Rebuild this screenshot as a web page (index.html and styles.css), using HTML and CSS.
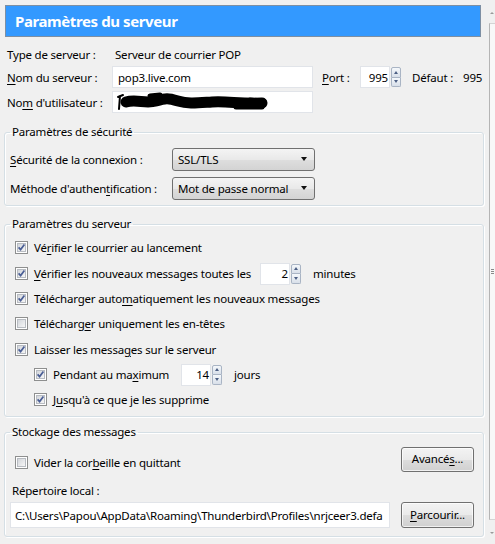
FILE: index.html
```html
<!DOCTYPE html>
<html lang="fr">
<head>
<meta charset="utf-8">
<title>Paramètres du serveur</title>
<link rel="stylesheet" href="styles.css">
</head>
<body>
<div class="window">
  <main class="content">
    <div class="header"><h1 class="title">Paramètres du serveur</h1></div>

    <div class="top">
      <div class="trow trow1">
        <span class="tlabel">Type de serveur :</span>
        <span class="tvalue">Serveur de courrier POP</span>
      </div>
      <div class="trow trow2">
        <span class="tlabel"><u>N</u>om du serveur :</span>
        <span class="textbox wide">pop3.live.com</span>
        <span class="portlabel"><u>P</u>ort :</span>
        <span class="spin"><span class="spinfield">995</span><span class="spinbtns"><span class="sb up"></span><span class="sb down"></span></span></span>
        <span class="deflabel">Défaut :</span>
        <span class="defvalue">995</span>
      </div>
      <div class="trow trow3">
        <span class="tlabel">No<u>m</u> d'utilisateur :</span>
        <span class="textbox wide redacted"><svg class="scribble" width="152" height="20" viewBox="0 0 152 20"><path d="M2 5 L7 3 M4 4 L3 17" stroke="#000" stroke-width="2" fill="none" stroke-linecap="round"/><path d="M10 10 C20 7, 30 12, 40 9 S 52 6, 62 9 S 80 11, 96 10 S 124 12, 146 11" stroke="#000" stroke-width="11" fill="none" stroke-linecap="round"/><path d="M34 4 L44 3 M120 15 L146 15 M134 8 L148 9" stroke="#000" stroke-width="5" fill="none" stroke-linecap="round"/></svg></span>
      </div>
    </div>

    <fieldset class="group sec">
      <legend>Paramètres de sécurité</legend>
      <div class="srow srow1"><span class="slabel"><u>S</u>écurité de la connexion :</span><span class="select">SSL/TLS<span class="caret"></span></span></div>
      <div class="srow srow2"><span class="slabel">Méthode d'authen<u>t</u>ification :</span><span class="select">Mot de passe normal<span class="caret"></span></span></div>
    </fieldset>

    <fieldset class="group srv">
      <legend>Paramètres du serveur</legend>
      <div class="crow first"><span class="cb"><span class="cbi"></span><svg class="tick" width="13" height="13" viewBox="0 0 13 13"><path d="M3.6 6.4 L5.6 8.6 L9.4 3.6" stroke="#4a5e95" stroke-width="1.7" fill="none"/></svg></span><span class="ctext">Vé<u>r</u>ifier le courrier au lancement</span></div>
      <div class="crow plus1"><span class="cb"><span class="cbi"></span><svg class="tick" width="13" height="13" viewBox="0 0 13 13"><path d="M3.6 6.4 L5.6 8.6 L9.4 3.6" stroke="#4a5e95" stroke-width="1.7" fill="none"/></svg></span><span class="ctext w-min"><u>V</u>érifier les nouveaux messages toutes les</span><span class="spin"><span class="spinfield">2</span><span class="spinbtns"><span class="sb up"></span><span class="sb down"></span></span></span><span class="unit">minutes</span></div>
      <div class="crow"><span class="cb"><span class="cbi"></span><svg class="tick" width="13" height="13" viewBox="0 0 13 13"><path d="M3.6 6.4 L5.6 8.6 L9.4 3.6" stroke="#4a5e95" stroke-width="1.7" fill="none"/></svg></span><span class="ctext">Télécharger auto<u>m</u>atiquement les nouveaux messages</span></div>
      <div class="crow"><span class="cb"><span class="cbi"></span></span><span class="ctext">Télécharg<u>e</u>r uniquement les en-têtes</span></div>
      <div class="crow plus1"><span class="cb"><span class="cbi"></span><svg class="tick" width="13" height="13" viewBox="0 0 13 13"><path d="M3.6 6.4 L5.6 8.6 L9.4 3.6" stroke="#4a5e95" stroke-width="1.7" fill="none"/></svg></span><span class="ctext">Laisser les messa<u>g</u>es sur le serveur</span></div>
      <div class="crow indent"><span class="cb"><span class="cbi"></span><svg class="tick" width="13" height="13" viewBox="0 0 13 13"><path d="M3.6 6.4 L5.6 8.6 L9.4 3.6" stroke="#4a5e95" stroke-width="1.7" fill="none"/></svg></span><span class="ctext w-max">Pendant au ma<u>x</u>imum</span><span class="spin"><span class="spinfield">14</span><span class="spinbtns"><span class="sb up"></span><span class="sb down"></span></span></span><span class="unit">jours</span></div>
      <div class="crow indent"><span class="cb"><span class="cbi"></span><svg class="tick" width="13" height="13" viewBox="0 0 13 13"><path d="M3.6 6.4 L5.6 8.6 L9.4 3.6" stroke="#4a5e95" stroke-width="1.7" fill="none"/></svg></span><span class="ctext">J<u>u</u>squ'à ce que je les supprime</span></div>
    </fieldset>

    <fieldset class="group sto">
      <legend>Stockage des messages</legend>
      <div class="crow strow1"><span class="cb low"><span class="cbi"></span></span><span class="ctext low">Vider la cor<u>b</u>eille en quittant</span><span class="btn">Avancé<u>s</u>...</span></div>
      <div class="dirlabel">Répertoire local :</div>
      <div class="dirrow"><span class="textbox path">C:\Users\Papou\AppData\Roaming\Thunderbird\Profiles\nrjceer3.defa</span><span class="btn"><u>P</u>arcourir...</span></div>
    </fieldset>
  </main>

  <aside class="side">
    <div class="side-top"><span class="sarrow up"></span></div>
    <div class="side-track"><span class="grip"></span></div>
    <div class="side-bottom"><span class="sarrow down"></span></div>
  </aside>
</div>
</body>
</html>
```

FILE: styles.css
```css
* { box-sizing: border-box; }
html, body { margin: 0; padding: 0; }
body {
  background: #f0f0f0;
  font-family: "Noto Sans", "Open Sans", sans-serif;
  font-size: 11.5px;
  letter-spacing: -0.2px;
  color: #000;
  width: 495px;
  height: 544px;
  overflow: hidden;
}
u { text-decoration: underline; text-underline-offset: 2px; }

.window { display: flex; height: 544px; }
.content { width: 489px; flex: none; }

.header {
  margin: 5px 0 0 5px;
  width: 476px;
  height: 32px;
  background: #3399ff;
  border: 1px solid #7d8fa3;
  display: flex;
  align-items: center;
  padding-left: 9px;
}
.title {
  margin: 0;
  font-size: 15px;
  font-weight: 700;
  color: #fff;
  letter-spacing: -0.4px;
  line-height: 1;
}

.top { padding-left: 7px; }
.trow { display: flex; align-items: center; height: 22px; }
.trow1 { margin-top: 6px; }
.trow2 { margin-top: 1px; }
.trow3 { margin-top: 3px; }
.tlabel { width: 105px; flex: none; }
.tvalue { padding-left: 3px; }

.textbox {
  height: 22px;
  background: #fff;
  border: 1px solid #e1e4e9;
  display: flex;
  align-items: center;
  padding-left: 5px;
  white-space: nowrap;
  overflow: hidden;
  flex: none;
}
.wide { width: 201px; }
.redacted { padding-left: 3px; }
.scribble { display: block; }

.portlabel { margin-left: 9px; width: 38px; flex: none; }
.deflabel { margin-left: 11px; width: 51px; flex: none; }

.spin { display: flex; height: 22px; flex: none; }
.spinfield {
  width: 30px;
  background: #fff;
  border: 1px solid #e1e4e9;
  display: flex;
  align-items: center;
  justify-content: flex-end;
  padding-right: 1px;
}
.spinbtns {
  display: flex;
  flex-direction: column;
  width: 10px;
  margin: 1px 0 1px 1px;
}
.sb {
  flex: 1;
  border: 1px solid #a9b4c4;
  background: linear-gradient(#f5f8fb, #d8dfe9);
  display: flex;
  align-items: center;
  justify-content: center;
}
.sb.up { border-radius: 2px 2px 0 0; }
.sb.down { border-top: none; border-radius: 0 0 2px 2px; }
.sb.up::before {
  content: "";
  border-left: 2.5px solid transparent;
  border-right: 2.5px solid transparent;
  border-bottom: 3px solid #4d5f84;
}
.sb.down::before {
  content: "";
  border-left: 2.5px solid transparent;
  border-right: 2.5px solid transparent;
  border-top: 3px solid #4d5f84;
}

.group {
  margin: 0 5px 0 4px;
  padding: 0;
  border: 1px solid #d5dfe5;
  border-radius: 3px;
  box-shadow: inset 1px 1px 0 #fff, 1px 1px 0 #fff;
  min-width: 0;
}
.group legend {
  margin-left: 5px;
  padding: 0 2px;
  line-height: 16px;
}
.sec { margin-top: 11px; padding-bottom: 5px; }
.srv { margin-top: 10px; padding-bottom: 4px; }
.sto { margin-top: 7px; padding-bottom: 8px; }

.srow { display: flex; align-items: center; padding-left: 5px; }
.srow1 { margin-top: 8px; }
.srow2 { margin-top: 6px; }
.slabel { width: 162px; flex: none; }
.select {
  width: 143px;
  height: 23px;
  border: 1px solid #707070;
  border-radius: 3px;
  background: linear-gradient(#f4f4f4, #e9e9e9 50%, #dedede 51%, #d3d3d3);
  display: flex;
  align-items: center;
  padding: 0 7px 0 5px;
}
.caret {
  margin-left: auto;
  margin-top: -2px;
  width: 0;
  height: 0;
  border-left: 3px solid transparent;
  border-right: 3px solid transparent;
  border-top: 4px solid #111;
}

.crow { display: flex; align-items: center; height: 25px; padding-left: 10px; }
.crow.first { margin-top: 3px; }
.crow.plus1 { margin-top: 1px; }
.crow.indent { padding-left: 29px; }
.cb {
  width: 13px;
  height: 13px;
  flex: none;
  border: 1px solid #8e8f8f;
  background: #fff;
  display: grid;
  place-items: center;
  margin-right: 6px;
}
.cbi {
  grid-area: 1 / 1;
  width: 9px;
  height: 9px;
  border: 1px solid #b8bcc2;
  background: linear-gradient(135deg, #d3d6db, #f6f6f6);
}
.tick {
  grid-area: 1 / 1;
  display: block;
  margin: -1px;
}
.ctext { white-space: nowrap; }
.w-min { width: 226px; flex: none; }
.w-max { width: 128px; flex: none; }
.unit { margin-left: 12px; }

.strow1 { margin-top: 7px; padding-right: 9px; }
.strow1 .btn { margin-left: auto; }
.low { margin-top: 6px; }

.btn {
  width: 73px;
  height: 25px;
  flex: none;
  border: 1px solid #707070;
  border-radius: 3px;
  background: linear-gradient(#f3f3f3, #eaeaea 50%, #dddddd 51%, #d0d0d0);
  display: flex;
  align-items: center;
  justify-content: center;
  padding-bottom: 2px;
  box-shadow: inset 0 0 0 1px rgba(255,255,255,0.7);
}

.dirlabel { margin-top: 11px; height: 16px; line-height: 16px; padding-left: 7px; }
.dirrow { display: flex; align-items: center; margin-top: 3px; padding-left: 5px; }
.path { width: 380px; height: 26px; padding-left: 4px; margin-right: 11px; }
.dirrow .btn { height: 26px; }

.side { width: 6px; flex: none; display: flex; flex-direction: column; }
.side-top { height: 23px; display: flex; justify-content: center; padding-top: 12px; }
.side-track {
  height: 497px;
  border-left: 1px solid #b4b4b4;
  border-top: 1px solid #d4d4d4;
  border-bottom: 1px solid #d4d4d4;
  background: #f8f8f8;
  display: flex;
  align-items: center;
  justify-content: center;
}
.grip {
  width: 3px;
  height: 5px;
  background: repeating-linear-gradient(#8a8a8a 0 1px, transparent 1px 2px);
}
.side-bottom { display: flex; justify-content: center; padding-top: 12px; }
.sarrow { width: 0; height: 0; border-left: 2px solid transparent; border-right: 2px solid transparent; }
.sarrow.up { border-bottom: 2px solid #9a9a9a; }
.sarrow.down { border-top: 2px solid #9a9a9a; }
```
